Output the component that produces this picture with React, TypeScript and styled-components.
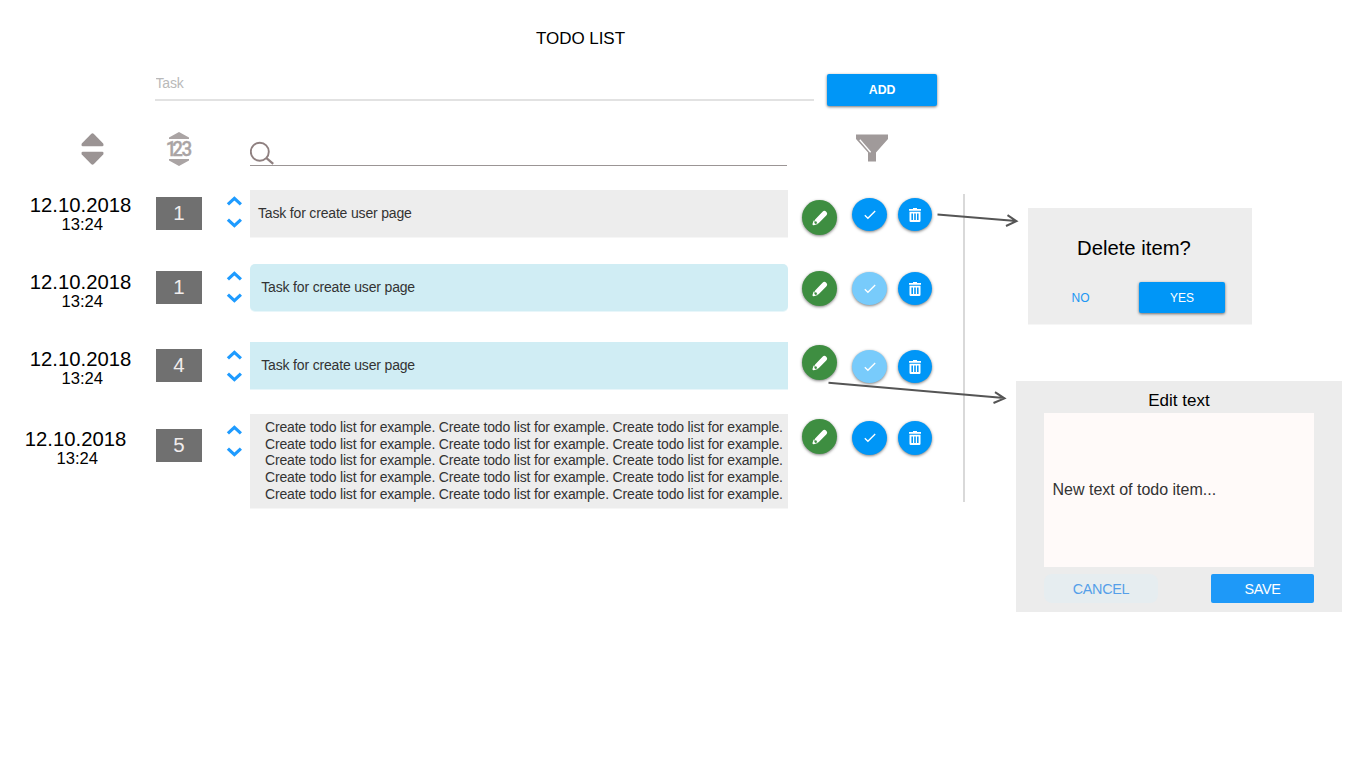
import React from "react";
import styled, { createGlobalStyle } from "styled-components";

const GlobalStyle = createGlobalStyle`
  *, *::before, *::after { box-sizing: border-box; }
  body {
    margin: 0;
    background: #fff;
    color: #000;
    font-family: "Liberation Sans", Arial, sans-serif;
  }
  button, input, textarea { font-family: inherit; }
  svg { display: block; }
`;

const Page = styled.div`
  position: relative;
  display: flex;
  align-items: flex-start;
  width: 1366px;
  height: 760px;
  overflow: hidden;
`;

const Main = styled.main`
  flex: none;
  width: 963px;
`;

const Title = styled.h1`
  margin: 0;
  padding: 29px 0 0 536px;
  font-size: 17px;
  font-weight: 400;
  line-height: 20px;
  letter-spacing: -0.05px;
`;

const AddForm = styled.div`
  display: flex;
  align-items: flex-start;
  gap: 13.4px;
  padding: 25px 0 0 155px;
  height: 84px;
`;

const TaskInput = styled.input`
  width: 659px;
  height: 27px;
  padding: 0 0 8px 0.5px;
  border: 0;
  border-bottom: 2px solid #e2e2e2;
  outline: 0;
  background: transparent;
  font-size: 14px;
  letter-spacing: -0.15px;
  &::placeholder { color: #b9b9b9; opacity: 1; }
`;

const RaisedButton = styled.button<{ $w: number; $h: number; $bold?: boolean }>`
  width: ${(p) => p.$w}px;
  height: ${(p) => p.$h}px;
  padding: 0;
  border: 0;
  border-radius: 2px;
  background: #0096f7;
  color: #fff;
  font-size: ${(p) => (p.$bold ? 12.3 : 12)}px;
  font-weight: ${(p) => (p.$bold ? 700 : 400)};
  box-shadow: 0 1px 3px rgba(0, 0, 0, 0.55);
`;

const Toolbar = styled.div`
  display: flex;
  align-items: flex-start;
  height: 57px;
`;

const Slot = styled.div<{ $left: number; $top?: number }>`
  flex: none;
  margin-left: ${(p) => p.$left}px;
  margin-top: ${(p) => p.$top ?? 0}px;
`;

const SearchField = styled.div`
  flex: none;
  display: flex;
  align-items: flex-end;
  width: 537px;
  height: 33px;
  margin-left: 57px;
  border-bottom: 1px solid #9b9595;
`;

const Row = styled.section<{ $h: number }>`
  display: flex;
  align-items: flex-start;
  height: ${(p) => p.$h}px;
`;

const Stamp = styled.div<{ $top: number; $shift: number }>`
  flex: none;
  width: 156px;
  margin-top: ${(p) => p.$top}px;
  padding-left: ${(p) => 29.8 - p.$shift}px;
  white-space: nowrap;
`;

const StampDate = styled.div`
  font-size: 20.3px;
  line-height: 22px;
`;

const StampTime = styled.div`
  padding-left: 31.7px;
  font-size: 16.6px;
  line-height: 18px;
`;

const Priority = styled.div<{ $top: number }>`
  flex: none;
  width: 46px;
  height: 33px;
  margin-top: ${(p) => p.$top}px;
  background: #707070;
  color: #f1eded;
  font-size: 20.5px;
  line-height: 31px;
  text-align: center;
`;

const Stepper = styled.div<{ $top: number }>`
  flex: none;
  display: flex;
  flex-direction: column;
  gap: 12px;
  width: 16px;
  margin: ${(p) => p.$top}px 8px 0 24px;
`;

const TaskText = styled.div<{ $done?: boolean; $indent: number; $round?: boolean; $tall?: boolean }>`
  flex: none;
  width: 538px;
  height: ${(p) => (p.$tall ? 94 : 47)}px;
  padding: ${(p) => (p.$tall ? 5 : 15)}px 0 0 ${(p) => p.$indent}px;
  border-radius: ${(p) => (p.$round ? 5 : 0)}px;
  background: ${(p) => (p.$done ? "#d0edf4" : "#ededed")};
  box-shadow: 0 1px 0 ${(p) => (p.$done ? "#e8f6fa" : "#f6f6f6")};
  color: #333;
  font-size: 14px;
  line-height: 16.7px;
  letter-spacing: -0.172px;
  white-space: nowrap;
`;

const RoundButton = styled.button<{ $tone: string; $top: number; $left: number; $w: number; $h: number }>`
  flex: none;
  display: flex;
  align-items: center;
  justify-content: center;
  width: ${(p) => p.$w}px;
  height: ${(p) => p.$h}px;
  margin: ${(p) => p.$top}px 0 0 ${(p) => p.$left}px;
  padding: 0;
  border: 0;
  border-radius: 50%;
  background: ${(p) => p.$tone};
  box-shadow: 0 1px 3px rgba(0, 0, 0, 0.5);
`;

const Divider = styled.div`
  flex: none;
  width: 2px;
  height: 308px;
  margin-top: 194px;
  background: #d9d9d9;
`;

const Aside = styled.aside`
  flex: none;
  width: 326px;
  margin: 208px 0 0 51px;
`;

const DeleteDialog = styled.section`
  width: 224px;
  height: 116px;
  margin: 0 0 57px 12px;
  padding-top: 28px;
  background: #ededed;
  box-shadow: 0 1px 0 #f6f6f6;
`;

const DeleteTitle = styled.h2`
  margin: 0;
  padding-left: 49px;
  font-size: 20.3px;
  font-weight: 400;
  line-height: 24px;
  white-space: nowrap;
`;

const DeleteActions = styled.div`
  display: flex;
  justify-content: space-between;
  padding: 22px 27px 0 43.5px;
`;

const FlatButton = styled.button`
  height: 31px;
  padding: 0;
  border: 0;
  background: transparent;
  color: #2196f3;
  font-size: 12px;
`;

const EditDialog = styled.section`
  width: 326px;
  height: 231px;
  padding: 11px 28px 0;
  background: #ececec;
`;

const EditTitle = styled.h2`
  margin: 0;
  font-size: 17px;
  font-weight: 400;
  line-height: 18px;
  text-align: center;
`;

const EditArea = styled.div`
  display: flex;
  align-items: center;
  height: 154px;
  margin-top: 3px;
  padding-left: 8.5px;
  background: #fffaf9;
  color: #333;
  font-size: 16px;
`;

const EditActions = styled.div`
  display: flex;
  justify-content: space-between;
  margin-top: 7px;
`;

const EditButton = styled.button<{ $primary?: boolean }>`
  width: ${(p) => (p.$primary ? 103 : 114)}px;
  height: 29px;
  padding: 0;
  border: 0;
  border-radius: ${(p) => (p.$primary ? 2 : 8)}px;
  background: ${(p) => (p.$primary ? "#1e99f8" : "#e6edf0")};
  color: ${(p) => (p.$primary ? "#fff" : "#559fe9")};
  font-size: 14.4px;
  letter-spacing: -0.3px;
`;

const Connectors = styled.svg`
  position: absolute;
  inset: 0;
  pointer-events: none;
`;

const SortIcon = () => (
  <svg width="24" height="34" viewBox="0 0 24 34" fill="#9b9494">
    <path d="M11.1 .9Q12.5 -.2 13.9 .9L23.2 10.6Q24.1 13.3 22.2 13.3H2.8Q.9 13.3 1.8 10.6Z" />
    <path d="M11.1 31.1Q12.5 32.2 13.9 31.1L23.2 21.4Q24.1 18.7 22.2 18.7H2.8Q.9 18.7 1.8 21.4Z" />
  </svg>
);

const NumberSortIcon = () => (
  <svg width="28" height="34" viewBox="0 0 28 34" fill="#aaa4a4">
    <path d="M14 0 24 5.5V7H4V5.5ZM14 34 24 28.5V27H4V28.5Z" />
    <text x=".8 8 18" y="24.3" transform="scale(.92 1)" fontFamily="Roboto, sans-serif" fontWeight="500" fontSize="20.5" stroke="#aaa4a4" strokeWidth=".3">
      123
    </text>
  </svg>
);

const SearchIcon = () => (
  <svg width="26" height="26" viewBox="0 0 26 26" fill="none" stroke="#8f8080" strokeWidth="1.9">
    <circle cx="9.8" cy="12.7" r="9" />
    <path d="m16.2 18.9 7 6" strokeWidth="2.2" />
  </svg>
);

const FunnelIcon = () => (
  <svg width="32" height="28" viewBox="0 0 32 28">
    <path d="M0 .5H32V5L20 18.5V27.5H12V18.5L0 5Z" fill="#a09a9a" />
    <path d="M3.8 5.8 14.6 18.2" stroke="#fff" strokeWidth="1.3" />
  </svg>
);

const Chevron = ({ down }: { down?: boolean }) => (
  <svg width="16" height="10" viewBox="0 0 16 10" fill="none" stroke="#1e9bff" strokeWidth="3.2">
    <path d={down ? "M1.9 1.6 8.4 7.6 14.9 1.6" : "M1.9 8.4 8.4 2.4 14.9 8.4"} />
  </svg>
);

const PencilIcon = () => (
  <svg width="16" height="16" viewBox="0 0 16 16">
    <path d="M5.2 11 12.4 3.6" stroke="#fff" strokeWidth="5.2" strokeLinecap="round" />
    <path d="M1.6 10.6 5.8 14 1.8 15.3Q.4 15.5.5 14Z" fill="#fff" />
    <path d="m2.7 11.2 1.8.2.6 1.8-1.6.7-1.2-1z" fill="#3e8e41" />
  </svg>
);

const CheckIcon = () => (
  <svg width="12" height="10" viewBox="0 0 12 10" fill="none" stroke="#fff" strokeWidth="1.3">
    <path d="M.8 5.3 3.9 8.3 11.2 1" />
  </svg>
);

const TrashIcon = () => (
  <svg width="12" height="14" viewBox="0 0 12 14" fill="#fff">
    <path d="M4 0h4v1h4v1.8H0V1h4Z" />
    <path fillRule="evenodd" d="M.5 3.8h11v9q0 1.2-1.2 1.2H1.7q-1.2 0-1.2-1.2ZM2.4 5.5v6.6h1.6V5.5Zm2.8 0v6.6h1.6V5.5Zm2.8 0v6.6h1.6V5.5Z" />
  </svg>
);

const LONG_LINE = "Create todo list for example. Create todo list for example. Create todo list for example.";

interface Todo {
  height: number;
  priority: number;
  lines: string[];
  indent: number;
  done?: boolean;
  round?: boolean;
  dateTop: number;
  dateShift?: number;
  badgeTop: number;
  stepTop: number;
  editTop: number;
  checkTop: number;
  checkHeight?: number;
}

const todos: Todo[] = [
  { height: 74, priority: 1, lines: ["Task for create user page"], indent: 8, dateTop: 4, badgeTop: 7, stepTop: 6, editTop: 10, checkTop: 8 },
  { height: 78, priority: 1, lines: ["Task for create user page"], indent: 11.3, done: true, round: true, dateTop: 7, badgeTop: 7, stepTop: 7, editTop: 7, checkTop: 8 },
  { height: 72, priority: 4, lines: ["Task for create user page"], indent: 11.3, done: true, dateTop: 6, badgeTop: 7, stepTop: 8, editTop: 3, checkTop: 8 },
  { height: 100, priority: 5, lines: Array(5).fill(LONG_LINE), indent: 15, dateTop: 14, dateShift: 5, badgeTop: 15, stepTop: 11, editTop: 5, checkTop: 7, checkHeight: 34 },
];

const TodoRow = ({ t }: { t: Todo }) => (
  <Row $h={t.height}>
    <Stamp $top={t.dateTop} $shift={t.dateShift ?? 0}>
      <StampDate>12.10.2018</StampDate>
      <StampTime>13:24</StampTime>
    </Stamp>
    <Priority $top={t.badgeTop}>{t.priority}</Priority>
    <Stepper $top={t.stepTop}>
      <Chevron />
      <Chevron down />
    </Stepper>
    <TaskText $done={t.done} $round={t.round} $indent={t.indent} $tall={t.lines.length > 1}>
      {t.lines.map((line, i) => (
        <div key={i}>{line}</div>
      ))}
    </TaskText>
    <RoundButton $tone="#3e8e41" $top={t.editTop} $left={14} $w={35} $h={35}>
      <PencilIcon />
    </RoundButton>
    <RoundButton $tone={t.done ? "#78cbfb" : "#0096f7"} $top={t.checkTop} $left={15} $w={35} $h={t.checkHeight ?? 33}>
      <CheckIcon />
    </RoundButton>
    <RoundButton $tone="#0096f7" $top={t.checkTop} $left={11} $w={34} $h={t.checkHeight ?? 33}>
      <TrashIcon />
    </RoundButton>
  </Row>
);

export default function App() {
  return (
    <>
      <GlobalStyle />
      <Page>
        <Main>
          <Title>TODO LIST</Title>
          <AddForm>
            <TaskInput placeholder="Task" />
            <RaisedButton $w={109.6} $h={32} $bold>ADD</RaisedButton>
          </AddForm>
          <Toolbar>
            <Slot $left={80}><SortIcon /></Slot>
            <Slot $left={61} $top={-1}><NumberSortIcon /></Slot>
            <SearchField><SearchIcon /></SearchField>
            <Slot $left={69} $top={1}><FunnelIcon /></Slot>
          </Toolbar>
          {todos.map((t, i) => (
            <TodoRow key={i} t={t} />
          ))}
        </Main>
        <Divider />
        <Aside>
          <DeleteDialog>
            <DeleteTitle>Delete item?</DeleteTitle>
            <DeleteActions>
              <FlatButton>NO</FlatButton>
              <RaisedButton $w={86} $h={31}>YES</RaisedButton>
            </DeleteActions>
          </DeleteDialog>
          <EditDialog>
            <EditTitle>Edit text</EditTitle>
            <EditArea>New text of todo item...</EditArea>
            <EditActions>
              <EditButton>CANCEL</EditButton>
              <EditButton $primary>SAVE</EditButton>
            </EditActions>
          </EditDialog>
        </Aside>
        <Connectors width="1366" height="760" viewBox="0 0 1366 760" fill="none" stroke="#555" strokeWidth="2">
          <path d="M937.5 214.5 1016 221M1007.5 215.2 1016.5 221.2 1006 226" />
          <path d="M828.5 382.7 1004 398M995 392.2 1004.5 398.3 993.5 403" />
        </Connectors>
      </Page>
    </>
  );
}
